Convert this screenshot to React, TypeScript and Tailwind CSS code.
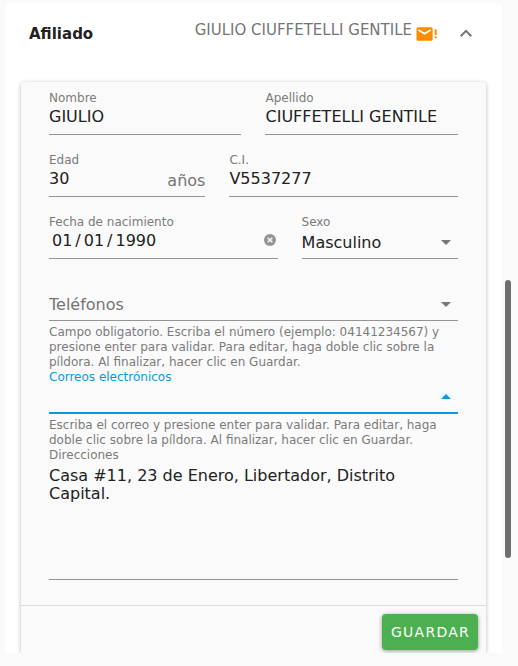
import { useState, type ReactNode } from "react";

const line = "w-full border-b border-[#949494] bg-transparent text-base text-[#212121] outline-none";

function Field({ id, label, className, children }: { id: string; label: string; className?: string; children: ReactNode }) {
  return (
    <div className={className}>
      <label htmlFor={id} className="block text-xs leading-[15px] text-[#7b7b7b]">
        {label}
      </label>
      {children}
    </div>
  );
}

function Caret({ up = false }: { up?: boolean }) {
  return (
    <svg
      viewBox="0 0 24 24"
      aria-hidden="true"
      className={
        up
          ? "pointer-events-none absolute right-0 top-0 size-6 text-[#039be5]"
          : "pointer-events-none absolute right-0 top-0 size-6 text-[#757575]"
      }
    >
      <path fill="currentColor" d={up ? "M7 14l5-5 5 5z" : "M7 10l5 5 5-5z"} />
    </svg>
  );
}

function Hint({ id, children }: { id: string; children: ReactNode }) {
  return (
    <p id={id} className="mt-1 text-xs leading-[15px] text-[#7b7b7b]">
      {children}
    </p>
  );
}

export default function App() {
  const [birth, setBirth] = useState("1990-01-01");

  return (
    <div className="flex min-h-screen bg-[#fafafa] pl-[5px] pt-[3px] font-['DejaVu_Sans',sans-serif] text-[#212121]">
      <main className="min-w-0 flex-1 self-start overflow-hidden rounded-t-sm bg-white">
        <header className="flex h-[62px] items-center px-6">
          <h1 className="flex-1 text-[15px] font-bold">Afiliado</h1>
          <span className="mb-2 mr-1 text-[15px] leading-5 text-[#757575]">GIULIO CIUFFETELLI GENTILE</span>
          <svg viewBox="0 0 24 24" className="mr-[18px] size-5 overflow-visible text-[#fb8c00]" role="img" aria-label="Correo pendiente">
            <rect x="0.6" y="4" width="19.4" height="16" rx="1.8" fill="currentColor" />
            <path d="M3 7.2 10.3 11.8 17.6 7.2" fill="none" stroke="#fff" strokeWidth="2.1" />
            <path d="M22.4 6.2h2.4v6.9h-2.4zM22.4 14.8h2.4v2.2h-2.4z" fill="currentColor" />
          </svg>
          <button type="button" aria-label="Contraer" aria-expanded="true" className="text-[#757575]">
            <svg viewBox="0 0 24 24" className="size-6">
              <path fill="currentColor" d="M7.41 14.91 12 10.33l4.59 4.58L18 13.5l-6-6-6 6z" />
            </svg>
          </button>
        </header>

        <form
          onSubmit={(e) => e.preventDefault()}
          className="mx-4 mt-[17px] rounded-t bg-[#fafafa] shadow-[0_1px_4px_rgba(0,0,0,0.28)]"
        >
          <div className="px-7 pb-[25px] pt-[9px]">
            <div className="grid grid-cols-12 gap-x-6 gap-y-[18px]">
              <Field id="nombre" label="Nombre" className="col-span-6">
                <input id="nombre" defaultValue="GIULIO" className={`${line} block h-[29px] pb-[7px]`} />
              </Field>
              <Field id="apellido" label="Apellido" className="col-span-6">
                <input id="apellido" defaultValue="CIUFFETELLI GENTILE" className={`${line} block h-[29px] pb-[7px]`} />
              </Field>
              <Field id="edad" label="Edad" className="col-span-5">
                <div className={`${line} flex h-[29px]`}>
                  <input id="edad" defaultValue="30" className="min-w-0 flex-1 bg-transparent pb-[7px] outline-none" />
                  <span className="pt-[3px] leading-5 text-[#757575]">años</span>
                </div>
              </Field>
              <Field id="ci" label="C.I." className="col-span-7">
                <input id="ci" defaultValue="V5537277" className={`${line} block h-[29px] pb-[7px]`} />
              </Field>
              <Field id="nacimiento" label="Fecha de nacimiento" className="col-span-7">
                <div className={`${line} flex h-[29px]`}>
                  <input
                    id="nacimiento"
                    type="date"
                    value={birth}
                    onChange={(e) => setBirth(e.target.value)}
                    className="min-w-0 flex-1 appearance-none bg-transparent pb-[7px] pl-[2px] outline-none [&::-webkit-calendar-picker-indicator]:hidden [&::-webkit-datetime-edit-text]:px-[2px]"
                  />
                  <button type="button" aria-label="Borrar fecha" onClick={() => setBirth("")} className="mb-2 mr-px text-[#949494]">
                    <svg viewBox="0 0 14 14" className="size-[14px]">
                      <circle cx="7" cy="7" r="6" fill="currentColor" />
                      <path d="m4.7 4.7 4.6 4.6m0-4.6L4.7 9.3" stroke="#fafafa" strokeWidth="1.5" />
                    </svg>
                  </button>
                </div>
              </Field>
              <Field id="sexo" label="Sexo" className="col-span-5">
                <div className="relative">
                  <select id="sexo" defaultValue="Masculino" className={`${line} block h-[29px] appearance-none pb-[3px]`}>
                    <option>Masculino</option>
                    <option>Femenino</option>
                  </select>
                  <Caret />
                </div>
              </Field>
            </div>

            <div className="relative mt-[33px]">
              <input
                id="telefonos"
                aria-label="Teléfonos"
                aria-describedby="telefonos-ayuda"
                placeholder="Teléfonos"
                className={`${line} block h-[29px] pb-1 placeholder:text-[#757575]`}
              />
              <Caret />
            </div>
            <Hint id="telefonos-ayuda">
              Campo obligatorio. Escriba el número (ejemplo: 04141234567) y presione enter para validar. Para editar, haga doble
              clic sobre la píldora. Al finalizar, hacer clic en Guardar.
            </Hint>

            <label htmlFor="correos" className="block text-xs leading-[15px] text-[#039be5]">
              Correos electrónicos
            </label>
            <div className="relative">
              <input
                id="correos"
                aria-describedby="correos-ayuda"
                className="block h-[29px] w-full border-b-2 border-[#039be5] bg-transparent text-base outline-none"
              />
              <Caret up />
            </div>
            <Hint id="correos-ayuda">
              Escriba el correo y presione enter para validar. Para editar, haga doble clic sobre la píldora. Al finalizar, hacer
              clic en Guardar.
            </Hint>

            <Field id="direcciones" label="Direcciones">
              <textarea
                id="direcciones"
                defaultValue="Casa #11, 23 de Enero, Libertador, Distrito Capital."
                className={`${line} block h-[117px] resize-none pt-1 leading-[18px]`}
              />
            </Field>
          </div>

          <footer className="flex justify-end border-t border-[#dcdcdc] px-2 pb-[3px] pt-2">
            <button
              type="submit"
              className="h-9 rounded bg-[#4caf50] pl-[9px] pr-2 text-sm tracking-[0.09em] text-white shadow-[0_1px_4px_rgba(0,0,0,0.4)]"
            >
              GUARDAR
            </button>
          </footer>
        </form>
      </main>

      <div aria-hidden="true" className="w-4 pl-[3px] pt-[277px]">
        <div className="h-[278px] w-[6px] rounded-full bg-[#6e6e6e]" />
      </div>
    </div>
  );
}
